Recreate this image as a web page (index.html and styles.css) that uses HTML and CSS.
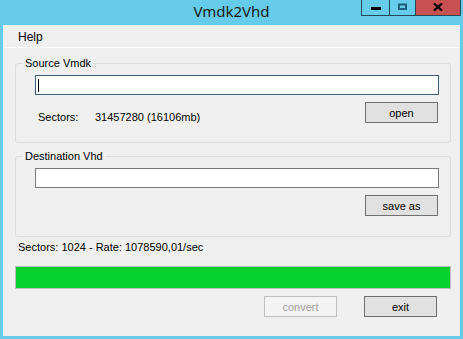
FILE: index.html
```html
<!DOCTYPE html>
<html>
<head>
    <meta charset="UTF-8">
    <title>Vmdk2Vhd</title>
    <link rel="stylesheet" href="styles.css">
</head>
<body>
    <div class="window">
        <!-- Title bar -->
        <div class="titlebar">
            <span></span>
            <span class="title">Vmdk2Vhd</span>
            <div class="controls">
                <span class="ctl ctl-min">
                    <svg width="10" height="3" viewBox="0 0 10 3"><rect width="10" height="3" fill="#000"/></svg>
                </span>
                <span class="ctl ctl-max">
                    <svg width="9" height="7" viewBox="0 0 9 7"><rect x="1" y="1.5" width="7" height="4.5" fill="none" stroke="#1f5f7d" stroke-width="2"/></svg>
                </span>
                <span class="ctl ctl-close">
                    <svg width="10" height="8" viewBox="0 0 10 8"><path d="M1 0.5 L9 7.5 M9 0.5 L1 7.5" stroke="#000" stroke-width="2.2"/></svg>
                </span>
            </div>
        </div>

        <div class="client">
            <div class="menubar"><span class="menu-item">Help</span></div>

            <div class="content">
                <fieldset class="group group-source">
                    <legend>Source Vmdk</legend>
                    <div class="group-body">
                        <div class="field field-focus"><span class="caret"></span></div>
                        <div class="row">
                            <div class="info">
                                <span class="info-label">Sectors:</span>
                                <span>31457280 (16106mb)</span>
                            </div>
                            <button class="btn">open</button>
                        </div>
                    </div>
                </fieldset>

                <fieldset class="group group-dest">
                    <legend>Destination Vhd</legend>
                    <div class="group-body">
                        <div class="field"></div>
                        <div class="row row-end">
                            <button class="btn">save as</button>
                        </div>
                    </div>
                </fieldset>

                <div class="status">Sectors: 1024 - Rate: 1078590,01/sec</div>

                <div class="progress"><div class="progress-fill" style="width: 100%"></div></div>

                <div class="actions">
                    <button class="btn btn-disabled">convert</button>
                    <button class="btn">exit</button>
                </div>
            </div>
        </div>
    </div>
</body>
</html>
```

FILE: styles.css
```css
/* Classic Win8 style dialog */
body {
    margin: 0;
    background-color: #67cbea;
    font-family: "Liberation Sans", Arial, sans-serif;
    font-size: 11px;
    line-height: 13px;
    color: #000;
}
.window {
    width: 463px;
    height: 339px;
    background-color: #67cbea;
    display: flex;
    flex-direction: column;
}

/* Title bar */
.titlebar {
    height: 25px;
    display: grid;
    grid-template-columns: 1fr auto 1fr;
    align-items: start;
}
.title {
    font-family: "Noto Sans", sans-serif;
    font-size: 15px;
    line-height: 23px;
    color: #1a1a1a;
}
.controls {
    justify-self: end;
    display: flex;
    margin-right: 2px;
}
.ctl {
    height: 16px;
    display: flex;
    align-items: center;
    justify-content: center;
    border-left: 1px solid #24475a;
    border-bottom: 1px solid #24475a;
    box-sizing: border-box;
}
.ctl-min {
    width: 28px;
    padding-top: 2px;
}
.ctl-max {
    width: 26px;
    padding-bottom: 2px;
}
.ctl-close {
    width: 46px;
    background-color: #c75050;
    border-right: 1px solid #24475a;
    padding-bottom: 2px;
}

/* Client area */
.client {
    flex: 1;
    margin: 0 3px 3px 3px;
    background-color: #f0f0f0;
    display: flex;
    flex-direction: column;
}
.menubar {
    height: 23px;
    border-bottom: 1px solid #ffffff;
    display: flex;
    align-items: center;
    padding-left: 15px;
    padding-top: 2px;
    box-sizing: border-box;
    font-size: 12px;
}
.content {
    padding: 9px 9px 0 12px;
    display: flex;
    flex-direction: column;
}

/* Group boxes */
.group {
    margin: 0;
    padding: 0;
    border: 1px solid #d9dfe3;
    border-radius: 3px;
    min-width: 0;
}
.group legend {
    padding: 0 2px;
    margin-left: 7px;
    font-size: 11px;
    line-height: 13px;
}
.group-body {
    padding: 5px 11px 18px 19px;
}
.group-dest {
    margin-top: 7px;
}
.group-dest .group-body {
    padding-bottom: 20px;
}
.field {
    height: 20px;
    box-sizing: border-box;
    background-color: #fff;
    border: 1px solid #7a7a7a;
    display: flex;
    align-items: center;
    padding-left: 2px;
}
.field-focus {
    border-color: #3c5f7e;
}
.caret {
    width: 1px;
    height: 13px;
    background-color: #000;
}
.row {
    margin-top: 7px;
    display: flex;
    justify-content: space-between;
    align-items: flex-start;
}
.row-end {
    justify-content: flex-end;
}
.info {
    padding-left: 3px;
    margin-top: 9px;
    display: flex;
    gap: 19px;
}
.info-label {
    width: 38px;
}

/* Buttons */
.btn {
    width: 73px;
    height: 21px;
    margin: 0 1px 0 0;
    padding: 0;
    background-color: #e1e1e1;
    border: 1px solid #707070;
    font-family: "Liberation Sans", Arial, sans-serif;
    font-size: 11px;
    color: #000;
}
.btn-disabled {
    background-color: #f4f4f4;
    border-color: #bfbfbf;
    color: #a0a0a0;
}

/* Status and progress */
.status {
    margin-top: 4px;
    padding-left: 3px;
}
.progress {
    margin-top: 12px;
    height: 23px;
    box-sizing: border-box;
    border: 1px solid #bcbcbc;
    background-color: #e6e6e6;
}
.progress-fill {
    height: 100%;
    background-color: #04d12d;
}
.actions {
    margin-top: 7px;
    display: flex;
    justify-content: flex-end;
    gap: 26px;
    padding-right: 13px;
}
```
